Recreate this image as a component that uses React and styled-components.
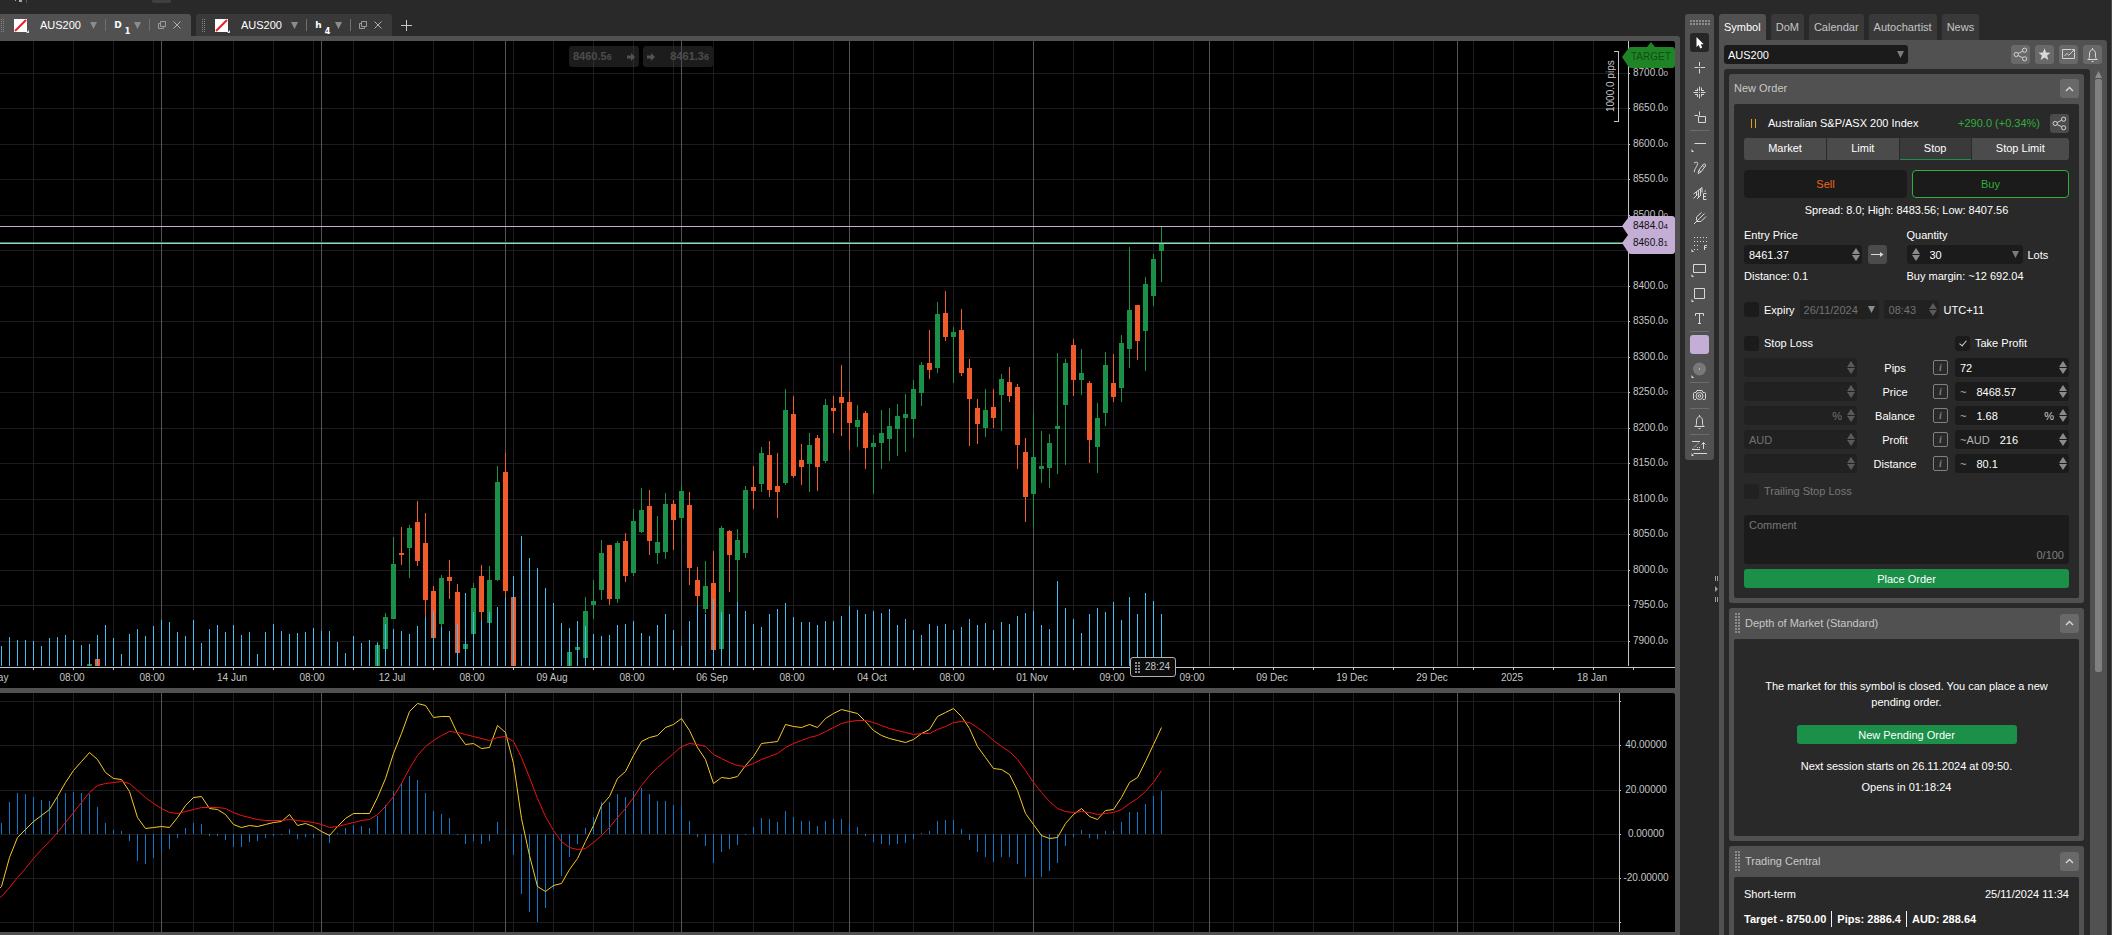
import React, { useState } from "react"
import styled, { createGlobalStyle, css } from "styled-components"

const GlobalStyle = createGlobalStyle`
  * {
    box-sizing: border-box;
  }

  body {
    margin: 0;
    background: #292929;
    color: #fff;
    font-family: "Liberation Sans", Arial, sans-serif;
    font-size: 11px;
    line-height: 16px;
    overflow: hidden;
  }

  button,
  input,
  select,
  textarea {
    font: inherit;
    color: inherit;
    margin: 0;
    padding: 0;
    border: 0;
    background: none;
    outline: none;
  }

  svg {
    display: block;
  }
`

/* ---------- chart data ---------- */

const STEP = 8
const slotX = (slot) => 1 + slot * STEP

// slot, high, body top, body bottom, low, rising
const candles = [
  [11, 623, 623, 625, 625, 1], [12, 618, 618, 625, 625, 0],
  [47, 601, 604, 625, 625, 1], [48, 572, 576, 608, 608, 1], [49, 496, 523, 578, 578, 1],
  [50, 486, 512, 514, 524, 0], [51, 484, 487, 507, 537, 1], [52, 460, 481, 520, 525, 0],
  [53, 472, 502, 559, 576, 0], [54, 545, 550, 597, 597, 0], [55, 534, 537, 583, 587, 1],
  [56, 519, 536, 540, 558, 0], [57, 543, 551, 612, 612, 0], [58, 603, 603, 608, 608, 1],
  [59, 542, 547, 593, 593, 1], [60, 524, 535, 571, 579, 0], [61, 525, 539, 582, 582, 1],
  [62, 425, 441, 539, 540, 1], [63, 412, 431, 550, 556, 0], [64, 556, 556, 625, 625, 0],
  [71, 611, 611, 625, 625, 1], [72, 606, 606, 609, 609, 1], [73, 556, 570, 617, 617, 1],
  [74, 539, 560, 564, 578, 1], [75, 499, 512, 549, 559, 1], [76, 504, 504, 558, 564, 0],
  [77, 500, 502, 558, 562, 1], [78, 492, 500, 535, 541, 0], [79, 468, 480, 532, 535, 1],
  [80, 447, 469, 491, 492, 1], [81, 449, 465, 500, 514, 0], [82, 475, 501, 512, 523, 1],
  [83, 452, 463, 511, 518, 1], [84, 459, 463, 479, 509, 0], [85, 444, 450, 477, 497, 1],
  [86, 451, 464, 527, 544, 0], [87, 526, 539, 555, 565, 0], [88, 520, 545, 568, 572, 1],
  [89, 510, 542, 609, 609, 0], [90, 485, 487, 608, 608, 1], [91, 489, 490, 514, 551, 0],
  [92, 488, 499, 519, 564, 1], [93, 445, 449, 512, 517, 1], [94, 425, 446, 450, 468, 0],
  [95, 406, 412, 443, 451, 1], [96, 400, 414, 449, 456, 0], [97, 412, 445, 451, 477, 0],
  [98, 348, 369, 442, 444, 1], [99, 355, 373, 435, 437, 0], [100, 403, 419, 426, 444, 0],
  [101, 392, 404, 423, 451, 1], [102, 394, 397, 426, 450, 0], [103, 358, 364, 420, 422, 1],
  [104, 355, 367, 370, 392, 0], [105, 324, 356, 362, 395, 0], [106, 351, 361, 382, 409, 0],
  [107, 364, 379, 386, 406, 1], [108, 370, 372, 407, 428, 0], [109, 394, 402, 406, 453, 1],
  [110, 369, 392, 402, 428, 1], [111, 367, 385, 398, 420, 1], [112, 363, 375, 388, 415, 1],
  [113, 353, 373, 377, 411, 1], [114, 339, 348, 378, 397, 1], [115, 321, 324, 352, 365, 1],
  [116, 289, 322, 329, 338, 0], [117, 261, 273, 327, 332, 1], [118, 250, 272, 296, 300, 0],
  [119, 286, 291, 296, 342, 1], [120, 268, 289, 332, 335, 0], [121, 318, 327, 358, 405, 0],
  [122, 358, 367, 383, 403, 0], [123, 348, 369, 387, 396, 1], [124, 348, 366, 377, 387, 0],
  [125, 333, 338, 354, 390, 1], [126, 326, 341, 355, 361, 0], [127, 343, 346, 404, 428, 0],
  [128, 397, 411, 456, 481, 0], [129, 372, 416, 453, 486, 1], [130, 390, 425, 428, 442, 1],
  [131, 393, 402, 427, 447, 1], [132, 312, 385, 388, 433, 1], [133, 318, 322, 364, 424, 1],
  [134, 298, 304, 339, 355, 0], [135, 308, 332, 339, 354, 1], [136, 340, 342, 399, 422, 0],
  [137, 362, 377, 406, 432, 1], [138, 311, 324, 372, 385, 1], [139, 313, 342, 356, 361, 0],
  [140, 294, 302, 347, 361, 1], [141, 206, 269, 308, 327, 1], [142, 264, 264, 300, 319, 0],
  [143, 236, 243, 290, 330, 1], [144, 213, 218, 255, 265, 1], [145, 186, 202, 210, 241, 1],
]

const volumes = [
  20, 29, 26, 26, 25, 20, 28, 29, 31, 26, 21, 22, 31, 41, 28, 12, 32, 37, 30, 40,
  46, 44, 34, 30, 46, 23, 37, 41, 34, 41, 31, 34, 12, 34, 42, 35, 32, 33, 34, 38,
  35, 35, 24, 13, 30, 23, 26, 23, 42, 37, 35, 32, 40, 49, 55, 39, 35, 42, 73, 54,
  46, 54, 59, 69, 90, 130, 108, 98, 78, 63, 43, 38, 45, 40, 32, 30, 31, 41, 42, 45,
  33, 30, 41, 52, 36, 20, 45, 61, 52, 67, 54, 52, 64, 55, 42, 39, 52, 57, 63, 49,
  44, 44, 41, 45, 45, 50, 60, 56, 52, 55, 53, 57, 41, 47, 36, 31, 42, 40, 42, 36,
  39, 47, 41, 43, 36, 44, 42, 50, 53, 55, 41, 37, 85, 58, 47, 33, 52, 58, 54, 64,
  46, 69, 52, 73, 65, 52,
]

const histogram = [
  11, 32, 41, 40, 37, 34, 33, 37, 41, 42, 41, 40, 27, 11, 4, 3, -7, -27, -30, -24,
  -18, -15, -4, 6, 11, 10, -2, -2, -6, -13, -13, -8, -7, -4, -2, -1, 5, -5, -3, -4,
  1, -9, 1, 6, 9, 8, 6, 18, 29, 43, 51, 58, 54, 41, 23, 20, 16, -1, -10, -7,
  -10, -7, 12, 4, -21, -60, -78, -88, -74, -55, -42, -23, -10, 6, 17, 32, 32, 40, 37, 43,
  46, 40, 33, 33, 29, 28, 13, -3, -12, -29, -18, -15, -11, -1, 7, 16, 15, 12, 23, 17,
  13, 13, 8, 13, 15, 15, 11, 7, -2, -8, -10, -11, -10, -9, -5, 1, 3, 13, 14, 14,
  5, -6, -18, -23, -28, -23, -23, -30, -43, -43, -43, -37, -29, -12, -3, 4, -4, -5, 3, 3,
  12, 22, 22, 30, 38, 43,
]

const macdLine = [
  193, 164, 144, 136, 128, 122, 116, 103, 89, 77, 68, 59, 66, 79, 85, 86, 98, 124, 135, 134,
  133, 134, 124, 112, 104, 103, 115, 116, 121, 131, 134, 132, 133, 131, 129, 128, 121, 132, 130, 133,
  138, 142, 133, 125, 120, 120, 120, 104, 85, 60, 40, 18, 10, 12, 24, 23, 23, 40, 51, 50,
  55, 54, 32, 39, 70, 125, 162, 193, 198, 192, 190, 176, 165, 148, 132, 112, 103, 85, 78, 62,
  48, 44, 42, 34, 31, 25, 37, 54, 66, 90, 84, 85, 83, 72, 63, 50, 49, 48, 31, 33,
  34, 31, 34, 25, 20, 16, 18, 20, 28, 37, 42, 45, 47, 49, 46, 40, 36, 23, 19, 15,
  23, 35, 53, 64, 75, 76, 81, 97, 120, 131, 142, 145, 144, 130, 121, 115, 123, 126, 117, 116,
  104, 89, 84, 68, 51, 34,
]

const signalLine = [
  203, 194, 184, 175, 165, 156, 148, 139, 129, 119, 109, 99, 92, 90, 89, 88, 90, 97, 104, 110,
  115, 119, 120, 118, 116, 114, 114, 114, 115, 119, 122, 124, 126, 127, 127, 127, 126, 127, 128, 129,
  131, 134, 133, 131, 129, 127, 126, 121, 113, 103, 90, 75, 62, 53, 47, 42, 38, 39, 41, 43,
  45, 47, 44, 43, 48, 64, 84, 105, 123, 137, 148, 154, 156, 155, 149, 142, 134, 124, 115, 104,
  92, 82, 74, 67, 60, 53, 50, 51, 53, 61, 65, 69, 72, 73, 70, 66, 63, 60, 54, 50,
  47, 44, 42, 38, 34, 30, 28, 27, 27, 29, 32, 35, 37, 39, 41, 40, 40, 36, 33, 29,
  28, 29, 34, 40, 47, 53, 58, 66, 77, 89, 99, 108, 115, 118, 119, 118, 119, 121, 120, 119,
  116, 110, 105, 98, 89, 77,
]

const timeLabels = [
  [-8, "23 May"], [72, "08:00"], [152, "08:00"], [232, "14 Jun"], [312, "08:00"],
  [392, "12 Jul"], [472, "08:00"], [552, "09 Aug"], [632, "08:00"], [712, "06 Sep"],
  [792, "08:00"], [872, "04 Oct"], [952, "08:00"], [1032, "01 Nov"], [1112, "09:00"],
  [1192, "09:00"], [1272, "09 Dec"], [1352, "19 Dec"], [1432, "29 Dec"], [1512, "2025"],
  [1592, "18 Jan"],
]

const minorLines = Array.from({ length: 41 }, (_, i) => 33 + i * 40)
const periodLines = [161, 321, 505, 681, 849, 1033, 1209, 1457]
const priceLevels = Array.from({ length: 17 }, (_, i) => ({
  y: Math.floor(32 + i * 35.5),
  label: `${8700 - i * 50}.0`,
}))
const indicatorLevels = [
  [8, ""], [52, "40.00000"], [97, "20.00000"], [141, "0.00000"], [185, "-20.00000"], [229, ""],
]

const toPoints = (values) =>
  values.map((y, slot) => `${slotX(slot)},${y}`).join(" ")

/* ---------- page ---------- */

const Page = styled.div`
  height: 100vh;
  display: flex;
  flex-direction: column;
  background: #292929;
  border-right: 1px solid #4c4c4c;
`

const TopStrip = styled.header`
  height: 14px;
  flex: none;
`

const Main = styled.main`
  flex: 1;
  min-height: 0;
  display: flex;
  gap: 5px;
  padding-right: 4px;
`

const ChartColumn = styled.section`
  flex: 1;
  min-width: 0;
  display: flex;
  flex-direction: column;
`

const ChartTabs = styled.nav`
  display: flex;
  gap: 5px;
  height: 22px;
  margin-left: -5px;
  flex: none;
`

const ChartTab = styled.div`
  width: 196px;
  display: flex;
  align-items: center;
  padding: 0 10px 0 6px;
  border-radius: 3px 3px 0 0;
  background: ${(p) => (p.$active ? "#515151" : "#393939")};
`

const ChartTabName = styled.button`
  display: flex;
  align-items: center;
  justify-content: space-between;
  width: 58px;
  margin-left: 11px;
  color: #fff;
`

const Timeframe = styled.button`
  display: flex;
  align-items: center;
  width: 27px;
  height: 20px;
  font: bold 9px "DejaVu Sans", sans-serif;

  sub {
    flex: 1;
    padding: 12px 0 0 3px;
    vertical-align: baseline;
    font-size: 8px;
    text-align: left;
  }
`

const TabDivider = styled.span`
  width: 1px;
  height: 12px;
  margin: 0 8px;
  background: #707070;
`

const TabAction = styled.button`
  display: flex;
  margin-left: ${(p) => (p.$spaced ? "7px" : "0")};
`

const AddTab = styled.button`
  display: flex;
  align-items: center;
  padding: 0 4px;
`

const ChartFrame = styled.div`
  flex: 1;
  min-height: 0;
  display: flex;
  flex-direction: column;
  gap: 5px;
  padding: 5px 5px 3px 0;
  border-radius: 0 3px 0 0;
  background: #515151;
`

const Pane = styled.div`
  position: relative;
  flex: ${(p) => p.$grow} 1 0;
  min-height: 0;
  display: flex;
  flex-direction: column;
  overflow: hidden;
  border-radius: 0 2px 0 0;
  background: #000;
`

const PaneRow = styled.div`
  flex: 1;
  min-height: 0;
  display: flex;
`

const Plot = styled.div`
  position: relative;
  flex: 1;
  min-width: 0;
`

const PlotSvg = styled.svg`
  width: 100%;
  height: 100%;
`

const AxisSvg = styled.svg`
  position: relative;
  flex: none;
  width: ${(p) => p.$width};
  height: 100%;
  overflow: visible;
  font-size: 10px;
  fill: #c6c6c6;
`

const TimeAxisSvg = styled.svg`
  flex: none;
  width: 100%;
  height: 22px;
  font-size: 10px;
  fill: #c6c6c6;
`

const QuickTrade = styled.div`
  position: absolute;
  top: 5px;
  left: 569px;
  display: flex;
  gap: 4px;
`

const QuickButton = styled.button`
  display: flex;
  align-items: center;
  justify-content: space-between;
  width: 70px;
  height: 21px;
  padding: 0 4px;
  border-radius: 3px;
  background: rgba(70, 70, 70, 0.4);
  color: #4c4c4c;
  font-weight: bold;

  small {
    font-size: 9px;
  }
`

const Scale = styled.div`
  position: absolute;
  top: 10px;
  right: 9px;
  width: 12px;
  height: 71px;
`

const ScaleText = styled.span`
  position: absolute;
  top: 0;
  right: 3px;
  height: 71px;
  writing-mode: vertical-rl;
  transform: rotate(180deg);
  text-align: center;
  font-size: 10px;
  line-height: 10px;
  color: #c6c6c6;
`

const ScaleBracket = styled.span`
  position: absolute;
  top: 0;
  right: 0;
  width: 5px;
  height: 71px;
  border: 1px solid #c6c6c6;
  border-left: 0;
`

const Countdown = styled.div`
  position: absolute;
  left: 1130px;
  bottom: 11px;
  display: flex;
  align-items: center;
  gap: 5px;
  width: 46px;
  height: 20px;
  padding-left: 4px;
  border: 1px solid #b0b0b0;
  border-radius: 3px;
  background: #0c0c0c;
  color: #c6c6c6;
  font-size: 10px;
`

/* ---------- toolbar ---------- */

const Toolbar = styled.aside`
  position: relative;
  align-self: flex-start;
  flex: none;
  width: 29px;
  padding: 6px 5px 0;
  border-radius: 3px;
  background: #515151;
`

const ToolGroup = styled.div`
  display: flex;
  flex-direction: column;
  gap: 6px;
  padding: 3px 0;
  border-top: 1px solid #6c6c6c;

  &:first-of-type {
    border-top: 0;
    padding-top: 8px;
  }
`

const ToolButton = styled.button`
  width: 19px;
  height: 19px;
  border-radius: 3px;
  background: ${(p) => (p.$active ? "#262626" : p.$swatch ? "#c4aed6" : "none")};
`

const Splitter = styled.div`
  position: absolute;
  top: 562px;
  left: 30px;
`

/* ---------- right panel ---------- */

const SidePanel = styled.aside`
  flex: none;
  width: 388px;
  display: flex;
  flex-direction: column;
`

const PanelTabs = styled.nav`
  display: flex;
  gap: 5px;
  height: 26px;
  flex: none;
`

const PanelTab = styled.button`
  padding: 0 5px 1px;
  border-radius: 3px 3px 0 0;
  background: ${(p) => (p.$active ? "#515151" : "#393939")};
  color: ${(p) => (p.$active ? "#fff" : "#c4c4c4")};
`

const PanelBody = styled.div`
  flex: 1;
  min-height: 0;
  display: flex;
  flex-direction: column;
  gap: 5px;
  padding: 5px 5px 0;
  border-radius: 0 3px 0 0;
  background: #515151;
`

const SymbolRow = styled.div`
  display: flex;
  gap: 5px;
`

const SelectBox = styled.div`
  display: flex;
  align-items: center;
  width: ${(p) => p.$width};
  height: 19px;
  padding: 0 4px;
  border-radius: 3px;
  background: ${(p) => (p.$dim ? "#212121" : "#1b1b1b")};
  color: ${(p) => (p.$dim ? "#727272" : "#fff")};

  select {
    flex: 1;
    min-width: 0;
    appearance: none;
    opacity: 1;
  }
`

const Spacer = styled.span`
  flex: 1;
`

const IconButton = styled.button`
  flex: none;
  display: flex;
  align-items: center;
  justify-content: center;
  width: 19px;
  height: 19px;
  border-radius: 3px;
  background: ${(p) => (p.$dark ? "#4b4b4b" : "#696969")};
`

const ScrollRow = styled.div`
  flex: 1;
  min-height: 0;
  display: flex;
  gap: 5px;
`

const ScrollArea = styled.div`
  flex: 1;
  min-width: 0;
  display: flex;
  flex-direction: column;
  gap: 5px;
  padding: 5px 6px 0 5px;
  border-radius: 3px 3px 0 0;
  background: #292929;
  overflow: hidden;
`

const Scrollbar = styled.div`
  width: 7px;
  padding-top: 2px;
`

const ScrollThumb = styled.div`
  height: 593px;
  margin-top: 1px;
  border-radius: 2px;
  background: #808080;
`

const Card = styled.section`
  flex: none;
  padding: 5px;
  border-radius: 3px;
  background: #515151;
`

const CardHeader = styled.header`
  display: flex;
  align-items: center;
  gap: 5px;
  margin-bottom: 6px;
  color: #c8c8c8;
`

const CardTitle = styled.h2`
  flex: 1;
  margin: 0;
  padding-bottom: 1px;
  font-size: 11px;
  font-weight: normal;
`

const CardBody = styled.div`
  padding: ${(p) => p.$padding || "10px"};
  border-radius: 2px;
  background: #292929;
`

const InstrumentRow = styled.div`
  display: flex;
  align-items: center;
`

const InstrumentName = styled.span`
  flex: 1;
  margin-left: 11px;
  padding-bottom: 1px;
`

const Change = styled.span`
  margin-right: 10px;
  padding-bottom: 1px;
  color: #2fae3a;
`

const OrderTypes = styled.div`
  display: flex;
  gap: 1px;
  height: 22px;
  margin: 5px 0 10px;
  border-radius: 3px;
  overflow: hidden;
`

const OrderType = styled.button`
  flex: 1 1 auto;
  padding-bottom: 1px;
  background: ${(p) => (p.$active ? "#3a3a3a" : "#4b4b4b")};
  border-bottom: 1px solid ${(p) => (p.$active ? "#1a9049" : "#4b4b4b")};
`

const Sides = styled.div`
  display: grid;
  grid-template-columns: 163fr 157fr;
  gap: 5px;
`

const SideButton = styled.button`
  height: 28px;
  padding-bottom: 1px;
  border-radius: 4px;
  background: #1b1b1b;
  color: ${(p) => (p.$buy ? "#2fae3a" : "#f0641e")};
  ${(p) =>
    p.$buy &&
    css`
      border: 1px solid #2fae3a;
    `}
`

const Spread = styled.p`
  margin: 4px 0 9px;
  text-align: center;
`

const TwoColumns = styled.div`
  display: grid;
  grid-template-columns: 1fr 1fr;
`

const Line = styled.div`
  display: flex;
  align-items: center;
  gap: ${(p) => p.$gap || "5px"};
  margin: ${(p) => p.$margin || "0"};
`

const FieldLabel = styled.label`
  display: block;
  margin-bottom: 2px;
`

const Field = styled.div`
  flex: none;
  display: flex;
  align-items: center;
  width: ${(p) => p.$width};
  height: 19px;
  padding: 0 2px 0 5px;
  border-radius: 3px;
  background: ${(p) => (p.$dim ? "#212121" : "#1b1b1b")};
  color: ${(p) => (p.$dim ? "#727272" : "#fff")};

  input {
    flex: 1;
    min-width: 0;
    width: 0;
    height: 19px;
  }
`

const Prefix = styled.span`
  margin-right: ${(p) => (p.$dim ? "0" : "10px")};
  color: ${(p) => (p.$dim ? "#727272" : "#b4b4b4")};
`

const Suffix = styled.span`
  margin-right: 5px;
  color: ${(p) => (p.$dim ? "#727272" : "#d0d0d0")};
`

const PresetButton = styled.button`
  margin-right: 2px;
`

const CheckLabel = styled.label`
  display: flex;
  align-items: center;
  gap: 5px;
  width: ${(p) => p.$width || "auto"};
  color: ${(p) => (p.$dim ? "#787878" : "#fff")};

  input {
    position: relative;
    width: 15px;
    height: 15px;
    appearance: none;
    border-radius: 3px;
    background: ${(p) => (p.$dim ? "#212121" : "#1b1b1b")};
  }

  input:checked::after {
    content: "";
    position: absolute;
    left: 6px;
    top: 3px;
    width: 3px;
    height: 6px;
    border: solid #d0d0d0;
    border-width: 0 1px 1px 0;
    transform: rotate(40deg);
  }
`

const Levels = styled.div`
  display: flex;
  flex-direction: column;
  gap: 5px;
`

const LevelRow = styled.div`
  display: flex;
  align-items: center;
`

const LevelName = styled.span`
  flex: 1;
  text-align: center;
`

const Info = styled.button`
  width: 15px;
  height: 15px;
  margin-right: 7px;
  border: 1px solid #808080;
  border-radius: 2px;
  color: #808080;
  font: italic bold 10px "Liberation Serif", serif;
`

const CommentBox = styled.div`
  position: relative;
  margin: 16px 0 5px;

  textarea {
    display: block;
    width: 100%;
    height: 49px;
    padding: 2px 5px;
    border-radius: 3px;
    background: #1b1b1b;
    resize: none;
  }

  textarea::placeholder {
    color: #787878;
  }
`

const Counter = styled.span`
  position: absolute;
  right: 5px;
  bottom: 1px;
  color: #808080;
`

const PrimaryButton = styled.button`
  display: block;
  width: ${(p) => p.$width || "100%"};
  height: 19px;
  margin: ${(p) => p.$margin || "0"};
  border-radius: 3px;
  background: #1a9049;
  color: #fff;
`

const Message = styled.p`
  margin: 0 0 5px;
  text-align: center;
`

const Split = styled.div`
  display: flex;
  justify-content: space-between;
  margin-bottom: ${(p) => p.$bottom};
`

const Targets = styled.div`
  display: flex;
  height: 16px;
  font-weight: bold;

  span + span {
    margin-left: 5px;
    padding-left: 5px;
    border-left: 1px solid #f2f2f2;
  }
`

/* ---------- icons ---------- */

const Caret = ({ color = "#8c8c8c" }) => (
  <svg width="7" height="7" fill={color}>
    <path d="M0 0h7L3.5 7z" />
  </svg>
)

const Grip = ({ cols = 2, rows = 5, gap = 3, color = "#8c8c8c" }) => (
  <svg width={cols * gap - 1} height={rows * gap - 1} fill={color} shapeRendering="crispEdges">
    {Array.from({ length: cols * rows }, (_, i) => (
      <rect
        key={i}
        x={(i % cols) * gap}
        y={Math.floor(i / cols) * gap}
        width={gap - 1}
        height={gap - 1}
      />
    ))}
  </svg>
)

const Spinner = ({ dim }) => (
  <svg width="8" height="13" fill={dim ? "#5a5a5a" : "#8a8a8a"}>
    <path d="M0 6 4 0l4 6zM0 7 4 13l4-6z" />
  </svg>
)

const ShareIcon = () => (
  <svg width="15" height="15" fill="none" stroke="#d2d2d2" strokeWidth="1">
    <circle cx="3.2" cy="7.5" r="2.1" />
    <circle cx="11.6" cy="3.2" r="2.1" />
    <circle cx="11.6" cy="11.8" r="2.1" />
    <path d="M5.1 6.5l4.6-2.3M5.1 8.5l4.6 2.3" />
  </svg>
)

const StarIcon = () => (
  <svg width="13" height="13" fill="#d8d8d8">
    <path d="M6.5.3l1.6 4.2 4.5.2-3.5 2.8 1.2 4.4-3.8-2.5-3.8 2.5 1.2-4.4L.4 4.7l4.5-.2z" />
  </svg>
)

const ChartIcon = () => (
  <svg width="15" height="13" fill="none" stroke="#d2d2d2">
    <path d="M10 1.5H1.5v9h12V5" />
    <path d="M3.5 8l2.3-2.6 2 1.8L13.5 1.5M10.5 1.5h3v3" />
  </svg>
)

const BellIcon = () => (
  <svg width="19" height="19" fill="none" stroke="#d8d8d8">
    <path d="M4.5 14.5h10M5.5 14.3c.9-1 1-2 1-5.300 0-2.600 1.300-4.300 3-4.300s3 1.700 3 4.300c0 3.300.1 4.300 1 5.300M9.500 3v1.600" />
    <path d="M8.500 16.500h2" />
  </svg>
)

const ChevronUp = () => (
  <svg width="9" height="6" fill="none" stroke="#d8d8d8" strokeWidth="1.4">
    <path d="M1 5l3.500-3.500L8 5" />
  </svg>
)

const ArrowRight = () => (
  <svg width="13" height="7" stroke="#d8d8d8" fill="none">
    <path d="M0 3.500h12" />
    <path d="M9 1l3.500 2.500L9 6z" fill="#d8d8d8" stroke="none" />
  </svg>
)

const QuickArrow = () => (
  <svg width="8" height="8" fill="#525252">
    <path d="M0 2.500h4V0l4 4-4 4V5.500H0z" />
  </svg>
)

const NoFlagIcon = () => (
  <svg width="15" height="15">
    <path d="M0 1h13v13H0z" fill="#fff" />
    <path d="M1 13L12 2" stroke="#ee1c25" strokeWidth="2" />
    <path d="M15 12v3h-3z" fill="#ddd" />
  </svg>
)

const DetachIcon = () => (
  <svg width="8" height="8" fill="none" stroke="#9c9c9c">
    <path d="M2.500.5h5v5h-5zM2.500 2.500h-2v5h5v-2" />
  </svg>
)

const CloseIcon = () => (
  <svg width="8" height="8" stroke="#b0b0b0">
    <path d="M.5.5l7 7M7.500.5l-7 7" />
  </svg>
)

const corner = <path d="M1.500 15v3h2.500z" fill="#d8d8d8" stroke="none" />

const toolShapes = {
  cursor: (
    <path d="M6.500 4v10l2.300-2 1.400 3.400 2-.8-1.500-3.300h3z" fill="#fff" stroke="none" />
  ),
  cross: <path d="M4.500 9.500h4M10.500 9.500h4.500M9.500 4v4M9.500 11v4.500M9 9.500h1" />,
  precise: (
    <path d="M3.500 9.500h4.500M11 9.500h4.500M9.500 3.500v4.500M9.500 11v4.500M9 9.500h1M7.500 5.500V8M5 7.500h2.500M11.500 4.500V8M11.500 7.500H14M7.500 11v3M5 11.500h2.500M11.500 11v2.500M11.500 11.500H14" />
  ),
  measure: <path d="M4.500 7.500H8M9.500 3.500v4M8.500 8.500h7v6h-7z" />,
  line: (
    <>
      <path d="M4.500 9.500H16" />
      {corner}
    </>
  ),
  pencil: (
    <>
      <path d="M4 4c4-2 4.500 0 2.500 3.500S3.500 13 5 13" />
      <path d="M8 14.500l.8-3.200 4.500-6c1.200-1.200 3 .2 2.100 1.700l-4.500 6zM9 11.300l2 1.700M12.500 6.500l2 1.500" />
    </>
  ),
  elliott: (
    <>
      <path d="M3.500 10l8.500-6.500v5M3.500 14.500l4-4M6.500 12V8M8.500 14V6.500M10.500 12V5M7 15l3.500-3.500" />
      <path d="M16.500 9.500h-3v6h3M13.500 12.500h2.500M14.500 7.500l1.500-1" />
    </>
  ),
  pitchfork: <path d="M4 15l5.500-5.500M6.500 8l5-4.500M9.500 9.500l5-5M11 12.500l5-5M6.500 8v3.500M7 12.500h4" />,
  fibonacci: (
    <>
      <path d="M4 3.500h13M4 7.500h13M4 11.500h6M4 15.500h6" strokeDasharray="1 2" />
      <path d="M14.500 16v-4.500h2.500M14.500 13.500h2" />
      {corner}
    </>
  ),
  rectangle: (
    <>
      <path d="M3.500 5.500h12v8h-12z" />
      {corner}
    </>
  ),
  square: (
    <>
      <path d="M4.500 4.500h10v10h-10z" />
      {corner}
    </>
  ),
  text: <path d="M5.500 7V4.500h8V7M9.500 4.500v9.500M8 14.500h3" />,
  opacity: (
    <>
      <circle cx="9.500" cy="9" r="6.500" fill="#787878" stroke="none" />
      <path d="M9 9h1" stroke="#fff" />
      {corner}
    </>
  ),
  camera: (
    <>
      <path d="M6 13.500H4.500a1 1 0 0 1-1-1v-5a1 1 0 0 1 1-1H6l1-2h5l1 2h1.500a1 1 0 0 1 1 1v5a1 1 0 0 1-1 1H13" />
      <circle cx="9.500" cy="10" r="3.500" />
      <circle cx="9.500" cy="10" r="1.300" />
    </>
  ),
  levels: (
    <>
      <path d="M2 3.500h8M2 11.500h8M3.500 15.500H17" />
      <path d="M3 10.500l6-6M7 9.500h4" strokeDasharray="1 1" />
      <path d="M13.500 11V4.500M11.500 6.500l2-2 2 2" />
      {corner}
    </>
  ),
}

const ToolIcon = ({ name }) => (
  <svg width="19" height="19" fill="none" stroke="#d8d8d8">
    {toolShapes[name]}
  </svg>
)

/* ---------- components ---------- */

function GridLines({ levels }) {
  return (
    <g shapeRendering="crispEdges">
      {minorLines.map((x) => (
        <rect key={x} x={x} width="1" height="100%" fill="#1c1c20" />
      ))}
      {levels.map((y) => (
        <rect key={y} y={y} width="100%" height="1" fill="#1c1c20" />
      ))}
      {periodLines.map((x) => (
        <rect key={x} x={x} width="1" height="100%" fill="#555" />
      ))}
    </g>
  )
}

function PriceTag({ y, color, textColor, price, pip }) {
  return (
    <g>
      <path
        d={`M-6 ${y}L0 ${y - 8}Q1 ${y - 10} 3 ${y - 10}H44Q47 ${y - 10} 47 ${y - 7}V${y + 8}Q47 ${
          y + 11
        } 44 ${y + 11}H3Q1 ${y + 11} 0 ${y + 9}Z`}
        fill={color}
      />
      <text x="5" y={y + 3} fill={textColor}>
        {price}
        <tspan fontSize="8">{pip}</tspan>
      </text>
    </g>
  )
}

function PriceChart() {
  return (
    <Pane $grow={647}>
      <PaneRow>
        <Plot>
          <PlotSvg>
            <GridLines levels={priceLevels.map((level) => level.y)} />
            <g shapeRendering="crispEdges">
              {candles.map(([slot, high, top, bottom, low, up]) => (
                <g key={slot} fill={up ? "#1a9049" : "#f15a2b"}>
                  <rect x={slotX(slot)} y={high} width="1" height={low - high} />
                  <rect x={slotX(slot) - 2} y={top} width="5" height={bottom - top} />
                </g>
              ))}
              {volumes.map((height, slot) => (
                <rect
                  key={slot}
                  x={slotX(slot)}
                  y={625 - height}
                  width="1"
                  height={height}
                  fill="#3fc0f4"
                />
              ))}
              <rect y="185" width="100%" height="1" fill="#c4aed6" />
              <rect y="201" width="100%" height="1" fill="#1a9049" />
              <rect y="202" width="100%" height="1" fill="#b9bfd6" />
            </g>
          </PlotSvg>
          <QuickTrade>
            <QuickButton>
              <span>
                8460.5<small>6</small>
              </span>
              <QuickArrow />
            </QuickButton>
            <QuickButton>
              <QuickArrow />
              <span>
                8461.3<small>6</small>
              </span>
            </QuickButton>
          </QuickTrade>
          <Scale>
            <ScaleText>1000.0 pips</ScaleText>
            <ScaleBracket />
          </Scale>
        </Plot>
        <AxisSvg $width="47px">
          <rect width="1" height="100%" shapeRendering="crispEdges" />
          {priceLevels.map(({ y, label }) => (
            <g key={y}>
              <rect x="0" y={y} width="2" height="1" shapeRendering="crispEdges" />
              {label !== "8450.0" && (
                <text x="5" y={y + 3}>
                  {label}
                  <tspan fontSize="8">0</tspan>
                </text>
              )}
            </g>
          ))}
          <path d="M-6 16L0 8Q1 6 3 6H19L23 1L27 6H44Q47 6 47 9V24Q47 27 44 27H3Q1 27 0 25Z" fill="#1f8426" />
          <text x="3" y="19" fill="#0e4f18">
            TARGET
          </text>
          <PriceTag y={202} color="#c4aed6" textColor="#111" price="8460.8" pip="1" />
          <PriceTag y={185} color="#c4aed6" textColor="#111" price="8484.0" pip="4" />
        </AxisSvg>
      </PaneRow>
      <TimeAxisSvg>
        <rect y="1" width="100%" height="1" shapeRendering="crispEdges" />
        {minorLines.map((x) => (
          <rect key={x} x={x} y="2" width="1" height="2" shapeRendering="crispEdges" />
        ))}
        {timeLabels.map(([x, label]) => (
          <text key={x} x={x} y="15" textAnchor="middle">
            {label}
          </text>
        ))}
      </TimeAxisSvg>
      <Countdown>
        <Grip rows={4} />
        28:24
      </Countdown>
    </Pane>
  )
}

function IndicatorChart() {
  return (
    <Pane $grow={239}>
      <PaneRow>
        <Plot>
          <PlotSvg>
            <GridLines levels={indicatorLevels.map(([y]) => y)} />
            <g shapeRendering="crispEdges" fill="#0c78cc">
              {histogram.map((value, slot) => (
                <rect
                  key={slot}
                  x={slotX(slot)}
                  y={value > 0 ? 141 - value : 141}
                  width="1"
                  height={Math.abs(value)}
                />
              ))}
            </g>
            <g fill="none" transform="translate(0.5 0.5)">
              <polyline points={`-1,195 ${toPoints(macdLine)}`} stroke="#f8c822" />
              <polyline points={`-1,204 ${toPoints(signalLine)}`} stroke="#f01212" />
            </g>
          </PlotSvg>
        </Plot>
        <AxisSvg $width="56px">
          <rect width="1" height="100%" shapeRendering="crispEdges" />
          {indicatorLevels.map(([y, label]) => (
            <g key={y}>
              <rect y={y} width="2" height="1" shapeRendering="crispEdges" />
              <text x="27" y={y + 3} textAnchor="middle">
                {label}
              </text>
            </g>
          ))}
        </AxisSvg>
      </PaneRow>
    </Pane>
  )
}

function SymbolTab({ active, timeframe, period }) {
  return (
    <ChartTab $active={active}>
      <Grip cols={2} rows={7} gap={2} color="#858585" />
      <Line $margin="0 0 0 10px">
        <NoFlagIcon />
      </Line>
      <ChartTabName>
        AUS200 <Caret />
      </ChartTabName>
      <TabDivider />
      <Timeframe>
        {timeframe}
        <sub>{period}</sub>
        <Caret />
      </Timeframe>
      <TabDivider />
      <TabAction aria-label="Detach">
        <DetachIcon />
      </TabAction>
      <TabAction $spaced aria-label="Close">
        <CloseIcon />
      </TabAction>
    </ChartTab>
  )
}

function ToolPalette() {
  const groups = [
    ["cursor", "cross", "precise", "measure"],
    ["line", "pencil", "elliott", "pitchfork", "fibonacci", "rectangle", "square", "text"],
    ["swatch", "opacity"],
    ["camera"],
    ["bell"],
    ["levels"],
  ]

  return (
    <Toolbar>
      <Grip cols={7} rows={2} />
      {groups.map((group) => (
        <ToolGroup key={group[0]}>
          {group.map((name) => (
            <ToolButton
              key={name}
              aria-label={name}
              $active={name === "cursor"}
              $swatch={name === "swatch"}
            >
              {name === "bell" ? <BellIcon /> : <ToolIcon name={name} />}
            </ToolButton>
          ))}
        </ToolGroup>
      ))}
      <Splitter>
        <svg width="4" height="26" fill="#9c9c9c">
          <path d="M0 0h1v5H0zM2 0h1v5H2zM0 10l3 3-3 3zM0 21h1v5H0zM2 21h1v5H2z" />
        </svg>
      </Splitter>
    </Toolbar>
  )
}

function NumberField({ id, label, width, prefix, suffix, value = "", dim }) {
  const [current, setCurrent] = useState(value)

  return (
    <Field $width={width} $dim={dim}>
      {prefix && <Prefix $dim={dim}>{prefix}</Prefix>}
      <input
        id={id}
        aria-label={label}
        value={current}
        disabled={dim}
        onChange={(e) => setCurrent(e.target.value)}
      />
      {suffix && <Suffix $dim={dim}>{suffix}</Suffix>}
      <Spinner dim={dim} />
    </Field>
  )
}

const levelRows = [
  { name: "Pips", value: "72" },
  { name: "Price", prefix: "~", value: "8468.57" },
  { name: "Balance", prefix: "~", value: "1.68", suffix: "%", lossSuffix: "%" },
  { name: "Profit", prefix: "~AUD", value: "216", lossPrefix: "AUD" },
  { name: "Distance", prefix: "~", value: "80.1" },
]

function OrderForm() {
  const [comment, setComment] = useState("")
  const [takeProfit, setTakeProfit] = useState(true)

  return (
    <CardBody>
      <InstrumentRow>
        <svg width="13" height="9" fill="#e0a020">
          <path d="M7 0h1v9H7zM11 0h1v9h-1z" />
        </svg>
        <InstrumentName>Australian S&amp;P/ASX 200 Index</InstrumentName>
        <Change>+290.0 (+0.34%)</Change>
        <IconButton $dark aria-label="Share">
          <ShareIcon />
        </IconButton>
      </InstrumentRow>

      <OrderTypes>
        {["Market", "Limit", "Stop", "Stop Limit"].map((type) => (
          <OrderType key={type} $active={type === "Stop"}>
            {type}
          </OrderType>
        ))}
      </OrderTypes>

      <Sides>
        <SideButton>Sell</SideButton>
        <SideButton $buy>Buy</SideButton>
      </Sides>
      <Spread>Spread: 8.0; High: 8483.56; Low: 8407.56</Spread>

      <TwoColumns>
        <div>
          <FieldLabel htmlFor="entry-price">Entry Price</FieldLabel>
          <Line $gap="6px" $margin="0 0 4px">
            <NumberField id="entry-price" width="118px" value="8461.37" />
            <IconButton $dark aria-label="Use current price">
              <ArrowRight />
            </IconButton>
          </Line>
          Distance: 0.1
        </div>
        <div>
          <FieldLabel htmlFor="quantity">Quantity</FieldLabel>
          <Line $margin="0 0 4px">
            <Field $width="116px">
              <Spinner />
              <Line $margin="0 0 0 10px" />
              <input id="quantity" defaultValue="30" />
              <PresetButton aria-label="Quantity presets">
                <Caret color="#7c7c7c" />
              </PresetButton>
            </Field>
            Lots
          </Line>
          Buy margin: ~12 692.04
        </div>
      </TwoColumns>

      <Line $margin="16px 0">
        <CheckLabel>
          <input type="checkbox" />
          Expiry
        </CheckLabel>
        <SelectBox $width="79px" $dim>
          <select aria-label="Expiry date" disabled>
            <option>26/11/2024</option>
          </select>
          <Caret />
        </SelectBox>
        <NumberField width="55px" label="Expiry time" value="08:43" dim />
        UTC+11
      </Line>

      <Split $bottom="7px">
        <CheckLabel>
          <input type="checkbox" />
          Stop Loss
        </CheckLabel>
        <CheckLabel $width="114px">
          <input
            type="checkbox"
            checked={takeProfit}
            onChange={() => setTakeProfit(!takeProfit)}
          />
          Take Profit
        </CheckLabel>
      </Split>

      <Levels>
        {levelRows.map((row) => (
          <LevelRow key={row.name}>
            <NumberField
              width="113px"
              label={`Stop loss ${row.name}`}
              prefix={row.lossPrefix}
              suffix={row.lossSuffix}
              dim
            />
            <LevelName>{row.name}</LevelName>
            <Info aria-label={`About ${row.name}`}>i</Info>
            <NumberField
              width="114px"
              label={`Take profit ${row.name}`}
              prefix={row.prefix}
              suffix={row.suffix}
              value={row.value}
            />
          </LevelRow>
        ))}
      </Levels>

      <Line $margin="10px 0 0">
        <CheckLabel $dim>
          <input type="checkbox" disabled />
          Trailing Stop Loss
        </CheckLabel>
      </Line>

      <CommentBox>
        <textarea
          aria-label="Comment"
          placeholder="Comment"
          maxLength={100}
          value={comment}
          onChange={(e) => setComment(e.target.value)}
        />
        <Counter>{comment.length}/100</Counter>
      </CommentBox>
      <PrimaryButton>Place Order</PrimaryButton>
    </CardBody>
  )
}

function PanelCard({ title, movable, children }) {
  return (
    <Card>
      <CardHeader>
        {movable && (
          <Line $margin="0 0 0 1px">
            <Grip rows={7} />
          </Line>
        )}
        <CardTitle>{title}</CardTitle>
        <IconButton aria-label={`Collapse ${title}`}>
          <ChevronUp />
        </IconButton>
      </CardHeader>
      {children}
    </Card>
  )
}

function SymbolPanel() {
  return (
    <SidePanel>
      <PanelTabs>
        {["Symbol", "DoM", "Calendar", "Autochartist", "News"].map((tab) => (
          <PanelTab key={tab} $active={tab === "Symbol"}>
            {tab}
          </PanelTab>
        ))}
      </PanelTabs>
      <PanelBody>
        <SymbolRow>
          <SelectBox $width="184px">
            <select aria-label="Symbol">
              <option>AUS200</option>
            </select>
            <Caret color="#7c7c7c" />
          </SelectBox>
          <Spacer />
          <IconButton aria-label="Share">
            <ShareIcon />
          </IconButton>
          <IconButton aria-label="Favourite">
            <StarIcon />
          </IconButton>
          <IconButton aria-label="New chart">
            <ChartIcon />
          </IconButton>
          <IconButton aria-label="Alert">
            <BellIcon />
          </IconButton>
        </SymbolRow>
        <ScrollRow>
          <ScrollArea>
            <PanelCard title="New Order">
              <OrderForm />
            </PanelCard>
            <PanelCard title="Depth of Market (Standard)" movable>
              <CardBody $padding="39px 20px 36px">
                <Message>
                  The market for this symbol is closed. You can place a new pending order.
                </Message>
                <PrimaryButton $width="220px" $margin="15px auto 14px">
                  New Pending Order
                </PrimaryButton>
                <Message>Next session starts on 26.11.2024 at 09:50.</Message>
                <Message>Opens in 01:18:24</Message>
              </CardBody>
            </PanelCard>
            <PanelCard title="Trading Central" movable>
              <CardBody $padding="9px 10px 30px">
                <Split $bottom="9px">
                  <span>Short-term</span>
                  <span>25/11/2024 11:34</span>
                </Split>
                <Targets>
                  <span>Target - 8750.00</span>
                  <span>Pips: 2886.4</span>
                  <span>AUD: 288.64</span>
                </Targets>
              </CardBody>
            </PanelCard>
          </ScrollArea>
          <Scrollbar>
            <svg width="7" height="7" fill="#8c8c8c">
              <path d="M3.500 0L7 7H0z" />
            </svg>
            <ScrollThumb />
          </Scrollbar>
        </ScrollRow>
      </PanelBody>
    </SidePanel>
  )
}

function App() {
  return (
    <>
      <GlobalStyle />
      <Page>
        <TopStrip>
          <svg width="180" height="4">
            <path d="M15 0h1v1h-1zM19 0h3v2h-3z" fill="#aaa" />
            <path d="M26 0h1v3h-1z" fill="#555" />
            <path d="M152 0h19v1q0 2-2 2h-15q-2 0-2-2z" fill="#3f3f3f" />
          </svg>
        </TopStrip>
        <Main>
          <ChartColumn>
            <ChartTabs>
              <SymbolTab active timeframe="D" period="1" />
              <SymbolTab timeframe="h" period="4" />
              <AddTab aria-label="Add chart">
                <svg width="11" height="11" stroke="#c8c8c8">
                  <path d="M5.500 0v11M0 5.500h11" />
                </svg>
              </AddTab>
            </ChartTabs>
            <ChartFrame>
              <PriceChart />
              <IndicatorChart />
            </ChartFrame>
          </ChartColumn>
          <ToolPalette />
          <SymbolPanel />
        </Main>
      </Page>
    </>
  )
}

export default App
